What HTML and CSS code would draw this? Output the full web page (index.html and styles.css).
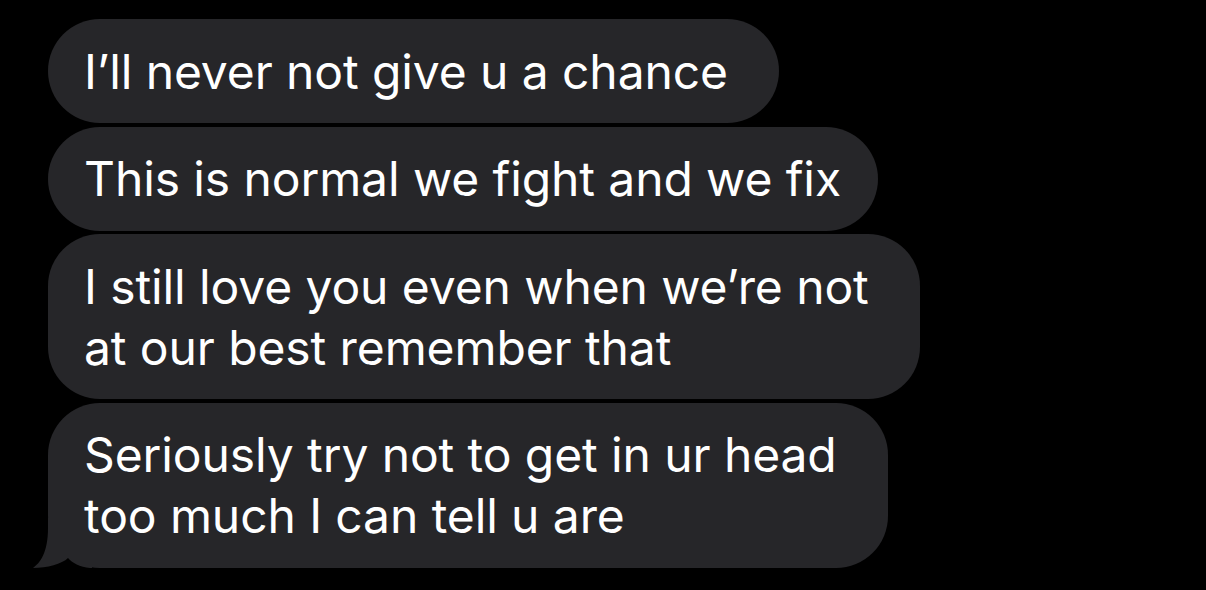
FILE: index.html
```html
<!DOCTYPE html>
<html>
<head>
<meta charset="utf-8">
<link rel="stylesheet" href="styles.css">
</head>
<body>
<div class="thread">
  <div class="bubble">I’ll never not give u a chance</div>
  <div class="bubble tight">This is normal we fight and we fix</div>
  <div class="bubble">I still love you even when we’re not<br>at our best remember that</div>
  <div class="bubble">Seriously try not to get in ur head<br>too much I can tell u are
    <svg class="tail" width="60" height="50" viewBox="0 0 60 50"><path d="M16,0 L60,0 L60,50 L58,50 C48,49 40,45 36,40 C30,46 15,50 1,50 C8,45 16,35 16,10 Z" fill="#262629"/></svg>
  </div>
</div>
</body>
</html>
```
FILE: styles.css
```css
html, body {
  margin: 0;
  background: #000;
  height: 100%;
  overflow: hidden;
}
.thread {
  display: flex;
  flex-direction: column;
  align-items: flex-start;
  gap: 3.5px;
  padding: 19px 0 0 48px;
}
.bubble {
  position: relative;
  z-index: 0;
  background: #262629;
  color: #fff;
  font-family: Inter, "Noto Sans", sans-serif;
  font-size: 48px;
  line-height: 61px;
  letter-spacing: -0.1px;
  padding: 21.5px 51px 21.5px 36px;
  border-radius: 52px;
  white-space: nowrap;
}
.bubble.tight {
  padding-right: 37px;
}
.tail {
  position: absolute;
  z-index: -1;
  left: -16px;
  bottom: 0;
  display: block;
}
```
